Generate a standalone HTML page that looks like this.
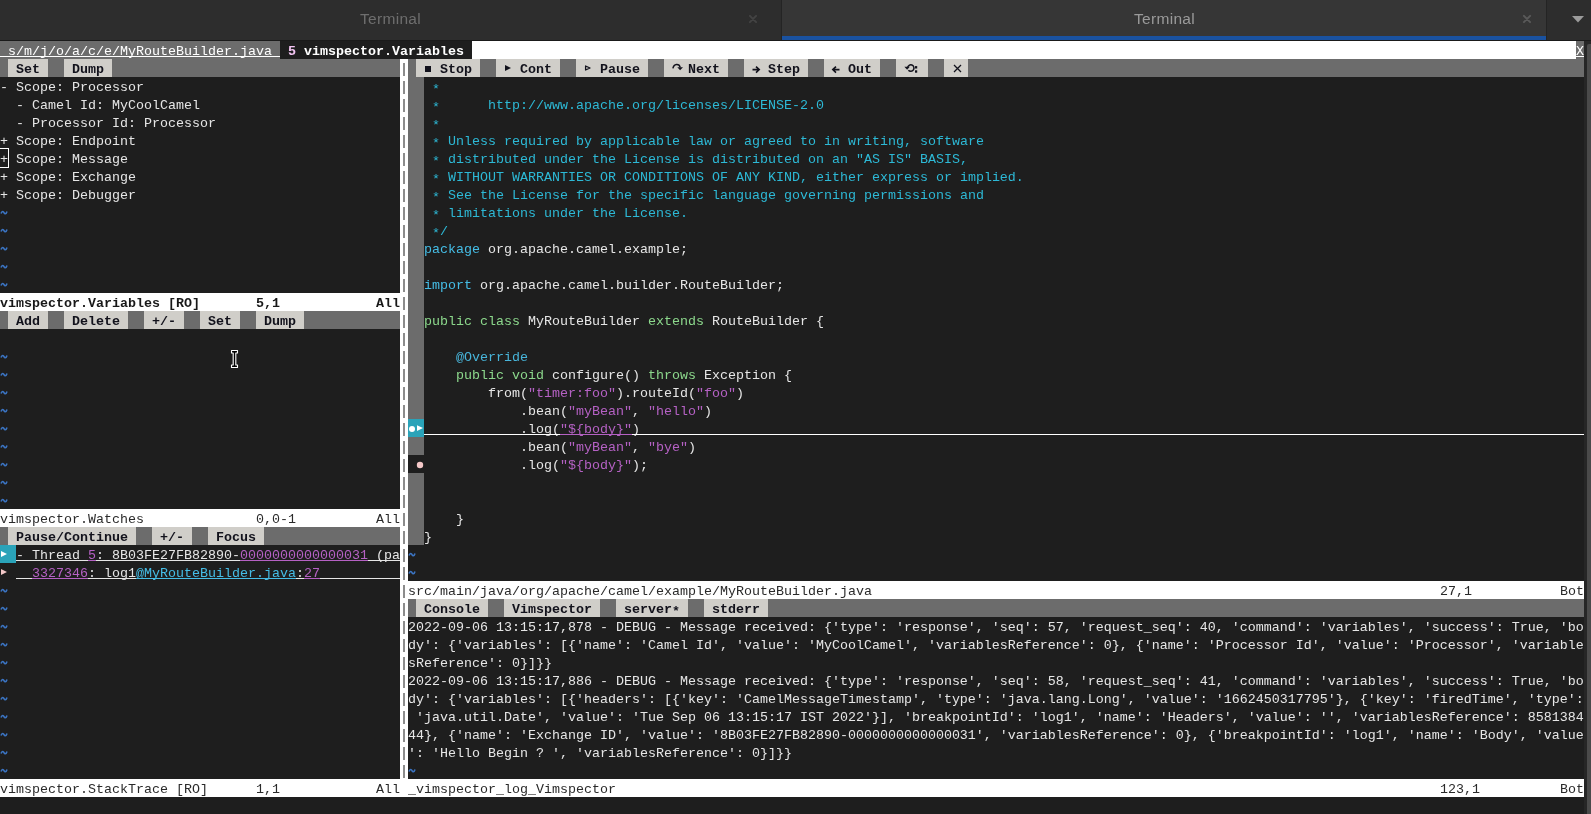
<!DOCTYPE html>
<html><head><meta charset="utf-8"><style>
html,body{margin:0;padding:0;background:#1e1e1e;width:1591px;height:814px;overflow:hidden;position:relative}
.t{position:absolute;white-space:pre;font-family:"Liberation Mono",monospace;font-size:13.333px;line-height:16px;letter-spacing:0.000px}
.s{position:absolute;white-space:pre;font-family:"Liberation Sans",sans-serif;font-size:15.5px;line-height:20px;letter-spacing:0.3px}
</style></head><body><div style="position:absolute;left:0;top:0;width:1591px;height:814px;will-change:transform">
<div style="position:absolute;left:0px;top:0px;width:1591px;height:40px;background:#2d2d2d;"></div>
<div style="position:absolute;left:782px;top:0px;width:764px;height:40px;background:#363636;"></div>
<div style="position:absolute;left:781px;top:0px;width:1px;height:40px;background:#242424;"></div>
<div style="position:absolute;left:1546px;top:0px;width:1px;height:40px;background:#242424;"></div>
<div style="position:absolute;left:782px;top:36px;width:764px;height:4px;background:#1a52a0;"></div>
<div style="position:absolute;left:0px;top:40px;width:1591px;height:1px;background:#1a1a1a;"></div>
<span class="s" style="left:360px;top:9px;color:#6e6e6e;">Terminal</span>
<span class="s" style="left:1134px;top:9px;color:#9a9a9a;">Terminal</span>
<svg style="position:absolute;left:748px;top:14px" width="10" height="10" viewBox="0 0 10 10"><path d="M1.9 1.9 L8.1 8.1 M8.1 1.9 L1.9 8.1" stroke="#434343" stroke-width="2" stroke-linecap="round"/></svg>
<svg style="position:absolute;left:1522px;top:14px" width="10" height="10" viewBox="0 0 10 10"><path d="M1.9 1.9 L8.1 8.1 M8.1 1.9 L1.9 8.1" stroke="#595959" stroke-width="2" stroke-linecap="round"/></svg>
<svg style="position:absolute;left:1572px;top:16px" width="12" height="7" viewBox="0 0 12 7"><path d="M0 0 L12 0 L6 6.5 Z" fill="#9b9b9b"/></svg>
<div style="position:absolute;left:1584px;top:41px;width:7px;height:773px;background:#262626;"></div>
<div style="position:absolute;left:1587px;top:44px;width:4px;height:770px;background:#4a4a4a;border-radius:2px 0 0 0;"></div>
<div style="position:absolute;left:0px;top:41px;width:1584px;height:773px;background:#1e1e1e;"></div>
<div style="position:absolute;left:0px;top:41px;width:280px;height:18px;background:#6c6c6c;"></div>
<span class="t" style="left:8px;top:43.5px;color:#ffffff;">s/m/j/o/a/c/e/MyRouteBuilder.java</span>
<div style="position:absolute;left:0px;top:56px;width:280px;height:1px;background:#ffffff;"></div>
<div style="position:absolute;left:280px;top:41px;width:192px;height:18px;background:#1e1e1e;"></div>
<span class="t" style="left:288px;top:43.5px;color:#f5c6f5;font-weight:bold;">5</span>
<span class="t" style="left:304px;top:43.5px;color:#ffffff;font-weight:bold;">vimspector.Variables</span>
<div style="position:absolute;left:472px;top:41px;width:1104px;height:18px;background:#ffffff;"></div>
<div style="position:absolute;left:1576px;top:41px;width:8px;height:18px;background:#6c6c6c;"></div>
<span class="t" style="left:1576px;top:43.5px;color:#ffffff;">X</span>
<div style="position:absolute;left:1576px;top:56px;width:8px;height:1px;background:#ffffff;"></div>
<div style="position:absolute;left:400px;top:59px;width:8px;height:18px;background:#ffffff;"></div>
<div style="position:absolute;left:403px;top:63px;width:2px;height:13px;background:#8c8c8c;"></div>
<div style="position:absolute;left:400px;top:77px;width:8px;height:18px;background:#ffffff;"></div>
<div style="position:absolute;left:403px;top:81px;width:2px;height:13px;background:#8c8c8c;"></div>
<div style="position:absolute;left:400px;top:95px;width:8px;height:18px;background:#ffffff;"></div>
<div style="position:absolute;left:403px;top:99px;width:2px;height:13px;background:#8c8c8c;"></div>
<div style="position:absolute;left:400px;top:113px;width:8px;height:18px;background:#ffffff;"></div>
<div style="position:absolute;left:403px;top:117px;width:2px;height:13px;background:#8c8c8c;"></div>
<div style="position:absolute;left:400px;top:131px;width:8px;height:18px;background:#ffffff;"></div>
<div style="position:absolute;left:403px;top:135px;width:2px;height:13px;background:#8c8c8c;"></div>
<div style="position:absolute;left:400px;top:149px;width:8px;height:18px;background:#ffffff;"></div>
<div style="position:absolute;left:403px;top:153px;width:2px;height:13px;background:#8c8c8c;"></div>
<div style="position:absolute;left:400px;top:167px;width:8px;height:18px;background:#ffffff;"></div>
<div style="position:absolute;left:403px;top:171px;width:2px;height:13px;background:#8c8c8c;"></div>
<div style="position:absolute;left:400px;top:185px;width:8px;height:18px;background:#ffffff;"></div>
<div style="position:absolute;left:403px;top:189px;width:2px;height:13px;background:#8c8c8c;"></div>
<div style="position:absolute;left:400px;top:203px;width:8px;height:18px;background:#ffffff;"></div>
<div style="position:absolute;left:403px;top:207px;width:2px;height:13px;background:#8c8c8c;"></div>
<div style="position:absolute;left:400px;top:221px;width:8px;height:18px;background:#ffffff;"></div>
<div style="position:absolute;left:403px;top:225px;width:2px;height:13px;background:#8c8c8c;"></div>
<div style="position:absolute;left:400px;top:239px;width:8px;height:18px;background:#ffffff;"></div>
<div style="position:absolute;left:403px;top:243px;width:2px;height:13px;background:#8c8c8c;"></div>
<div style="position:absolute;left:400px;top:257px;width:8px;height:18px;background:#ffffff;"></div>
<div style="position:absolute;left:403px;top:261px;width:2px;height:13px;background:#8c8c8c;"></div>
<div style="position:absolute;left:400px;top:275px;width:8px;height:18px;background:#ffffff;"></div>
<div style="position:absolute;left:403px;top:279px;width:2px;height:13px;background:#8c8c8c;"></div>
<div style="position:absolute;left:400px;top:293px;width:8px;height:18px;background:#ffffff;"></div>
<div style="position:absolute;left:403px;top:297px;width:2px;height:13px;background:#8c8c8c;"></div>
<div style="position:absolute;left:400px;top:311px;width:8px;height:18px;background:#ffffff;"></div>
<div style="position:absolute;left:403px;top:315px;width:2px;height:13px;background:#8c8c8c;"></div>
<div style="position:absolute;left:400px;top:329px;width:8px;height:18px;background:#ffffff;"></div>
<div style="position:absolute;left:403px;top:333px;width:2px;height:13px;background:#8c8c8c;"></div>
<div style="position:absolute;left:400px;top:347px;width:8px;height:18px;background:#ffffff;"></div>
<div style="position:absolute;left:403px;top:351px;width:2px;height:13px;background:#8c8c8c;"></div>
<div style="position:absolute;left:400px;top:365px;width:8px;height:18px;background:#ffffff;"></div>
<div style="position:absolute;left:403px;top:369px;width:2px;height:13px;background:#8c8c8c;"></div>
<div style="position:absolute;left:400px;top:383px;width:8px;height:18px;background:#ffffff;"></div>
<div style="position:absolute;left:403px;top:387px;width:2px;height:13px;background:#8c8c8c;"></div>
<div style="position:absolute;left:400px;top:401px;width:8px;height:18px;background:#ffffff;"></div>
<div style="position:absolute;left:403px;top:405px;width:2px;height:13px;background:#8c8c8c;"></div>
<div style="position:absolute;left:400px;top:419px;width:8px;height:18px;background:#ffffff;"></div>
<div style="position:absolute;left:403px;top:423px;width:2px;height:13px;background:#8c8c8c;"></div>
<div style="position:absolute;left:400px;top:437px;width:8px;height:18px;background:#ffffff;"></div>
<div style="position:absolute;left:403px;top:441px;width:2px;height:13px;background:#8c8c8c;"></div>
<div style="position:absolute;left:400px;top:455px;width:8px;height:18px;background:#ffffff;"></div>
<div style="position:absolute;left:403px;top:459px;width:2px;height:13px;background:#8c8c8c;"></div>
<div style="position:absolute;left:400px;top:473px;width:8px;height:18px;background:#ffffff;"></div>
<div style="position:absolute;left:403px;top:477px;width:2px;height:13px;background:#8c8c8c;"></div>
<div style="position:absolute;left:400px;top:491px;width:8px;height:18px;background:#ffffff;"></div>
<div style="position:absolute;left:403px;top:495px;width:2px;height:13px;background:#8c8c8c;"></div>
<div style="position:absolute;left:400px;top:509px;width:8px;height:18px;background:#ffffff;"></div>
<div style="position:absolute;left:403px;top:513px;width:2px;height:13px;background:#8c8c8c;"></div>
<div style="position:absolute;left:400px;top:527px;width:8px;height:18px;background:#ffffff;"></div>
<div style="position:absolute;left:403px;top:531px;width:2px;height:13px;background:#8c8c8c;"></div>
<div style="position:absolute;left:400px;top:545px;width:8px;height:18px;background:#ffffff;"></div>
<div style="position:absolute;left:403px;top:549px;width:2px;height:13px;background:#8c8c8c;"></div>
<div style="position:absolute;left:400px;top:563px;width:8px;height:18px;background:#ffffff;"></div>
<div style="position:absolute;left:403px;top:567px;width:2px;height:13px;background:#8c8c8c;"></div>
<div style="position:absolute;left:400px;top:581px;width:8px;height:18px;background:#ffffff;"></div>
<div style="position:absolute;left:403px;top:585px;width:2px;height:13px;background:#8c8c8c;"></div>
<div style="position:absolute;left:400px;top:599px;width:8px;height:18px;background:#ffffff;"></div>
<div style="position:absolute;left:403px;top:603px;width:2px;height:13px;background:#8c8c8c;"></div>
<div style="position:absolute;left:400px;top:617px;width:8px;height:18px;background:#ffffff;"></div>
<div style="position:absolute;left:403px;top:621px;width:2px;height:13px;background:#8c8c8c;"></div>
<div style="position:absolute;left:400px;top:635px;width:8px;height:18px;background:#ffffff;"></div>
<div style="position:absolute;left:403px;top:639px;width:2px;height:13px;background:#8c8c8c;"></div>
<div style="position:absolute;left:400px;top:653px;width:8px;height:18px;background:#ffffff;"></div>
<div style="position:absolute;left:403px;top:657px;width:2px;height:13px;background:#8c8c8c;"></div>
<div style="position:absolute;left:400px;top:671px;width:8px;height:18px;background:#ffffff;"></div>
<div style="position:absolute;left:403px;top:675px;width:2px;height:13px;background:#8c8c8c;"></div>
<div style="position:absolute;left:400px;top:689px;width:8px;height:18px;background:#ffffff;"></div>
<div style="position:absolute;left:403px;top:693px;width:2px;height:13px;background:#8c8c8c;"></div>
<div style="position:absolute;left:400px;top:707px;width:8px;height:18px;background:#ffffff;"></div>
<div style="position:absolute;left:403px;top:711px;width:2px;height:13px;background:#8c8c8c;"></div>
<div style="position:absolute;left:400px;top:725px;width:8px;height:18px;background:#ffffff;"></div>
<div style="position:absolute;left:403px;top:729px;width:2px;height:13px;background:#8c8c8c;"></div>
<div style="position:absolute;left:400px;top:743px;width:8px;height:18px;background:#ffffff;"></div>
<div style="position:absolute;left:403px;top:747px;width:2px;height:13px;background:#8c8c8c;"></div>
<div style="position:absolute;left:400px;top:761px;width:8px;height:18px;background:#ffffff;"></div>
<div style="position:absolute;left:403px;top:765px;width:2px;height:13px;background:#8c8c8c;"></div>
<div style="position:absolute;left:0px;top:59px;width:400px;height:18px;background:#6c6c6c;"></div>
<div style="position:absolute;left:8px;top:59px;width:40px;height:18px;background:#d0cec9;"></div>
<span class="t" style="left:16px;top:61.5px;color:#12121c;font-weight:bold;">Set</span>
<div style="position:absolute;left:64px;top:59px;width:48px;height:18px;background:#d0cec9;"></div>
<span class="t" style="left:72px;top:61.5px;color:#12121c;font-weight:bold;">Dump</span>
<span class="t" style="left:0px;top:79.5px;color:#e6e6e6;">- Scope: Processor</span>
<span class="t" style="left:16px;top:97.5px;color:#e6e6e6;">- Camel Id: MyCoolCamel</span>
<span class="t" style="left:16px;top:115.5px;color:#e6e6e6;">- Processor Id: Processor</span>
<span class="t" style="left:0px;top:133.5px;color:#e6e6e6;">+ Scope: Endpoint</span>
<span class="t" style="left:0px;top:151.5px;color:#e6e6e6;">+ Scope: Message</span>
<span class="t" style="left:0px;top:169.5px;color:#e6e6e6;">+ Scope: Exchange</span>
<span class="t" style="left:0px;top:187.5px;color:#e6e6e6;">+ Scope: Debugger</span>
<svg style="position:absolute;left:0px;top:203px" width="8" height="18"><path d="M1 10.6 C2 7.6 3.4 8.2 4 9.6 C4.6 11 6 11.6 7 8.4" fill="none" stroke="#3b74c2" stroke-width="1.6"/></svg>
<svg style="position:absolute;left:0px;top:221px" width="8" height="18"><path d="M1 10.6 C2 7.6 3.4 8.2 4 9.6 C4.6 11 6 11.6 7 8.4" fill="none" stroke="#3b74c2" stroke-width="1.6"/></svg>
<svg style="position:absolute;left:0px;top:239px" width="8" height="18"><path d="M1 10.6 C2 7.6 3.4 8.2 4 9.6 C4.6 11 6 11.6 7 8.4" fill="none" stroke="#3b74c2" stroke-width="1.6"/></svg>
<svg style="position:absolute;left:0px;top:257px" width="8" height="18"><path d="M1 10.6 C2 7.6 3.4 8.2 4 9.6 C4.6 11 6 11.6 7 8.4" fill="none" stroke="#3b74c2" stroke-width="1.6"/></svg>
<svg style="position:absolute;left:0px;top:275px" width="8" height="18"><path d="M1 10.6 C2 7.6 3.4 8.2 4 9.6 C4.6 11 6 11.6 7 8.4" fill="none" stroke="#3b74c2" stroke-width="1.6"/></svg>
<div style="position:absolute;left:-1px;top:148px;width:10px;height:20px;background:transparent;box-sizing:border-box;border:1px solid #ffffff;"></div>
<div style="position:absolute;left:0px;top:293px;width:400px;height:18px;background:#ffffff;"></div>
<span class="t" style="left:0px;top:295.5px;color:#181818;font-weight:bold;">vimspector.Variables [RO]</span>
<span class="t" style="left:256px;top:295.5px;color:#181818;font-weight:bold;">5,1</span>
<span class="t" style="left:376px;top:295.5px;color:#181818;font-weight:bold;">All</span>
<div style="position:absolute;left:0px;top:311px;width:400px;height:18px;background:#6c6c6c;"></div>
<div style="position:absolute;left:8px;top:311px;width:40px;height:18px;background:#d0cec9;"></div>
<span class="t" style="left:16px;top:313.5px;color:#12121c;font-weight:bold;">Add</span>
<div style="position:absolute;left:64px;top:311px;width:64px;height:18px;background:#d0cec9;"></div>
<span class="t" style="left:72px;top:313.5px;color:#12121c;font-weight:bold;">Delete</span>
<div style="position:absolute;left:144px;top:311px;width:40px;height:18px;background:#d0cec9;"></div>
<span class="t" style="left:152px;top:313.5px;color:#12121c;font-weight:bold;">+/-</span>
<div style="position:absolute;left:200px;top:311px;width:40px;height:18px;background:#d0cec9;"></div>
<span class="t" style="left:208px;top:313.5px;color:#12121c;font-weight:bold;">Set</span>
<div style="position:absolute;left:256px;top:311px;width:48px;height:18px;background:#d0cec9;"></div>
<span class="t" style="left:264px;top:313.5px;color:#12121c;font-weight:bold;">Dump</span>
<svg style="position:absolute;left:0px;top:347px" width="8" height="18"><path d="M1 10.6 C2 7.6 3.4 8.2 4 9.6 C4.6 11 6 11.6 7 8.4" fill="none" stroke="#3b74c2" stroke-width="1.6"/></svg>
<svg style="position:absolute;left:0px;top:365px" width="8" height="18"><path d="M1 10.6 C2 7.6 3.4 8.2 4 9.6 C4.6 11 6 11.6 7 8.4" fill="none" stroke="#3b74c2" stroke-width="1.6"/></svg>
<svg style="position:absolute;left:0px;top:383px" width="8" height="18"><path d="M1 10.6 C2 7.6 3.4 8.2 4 9.6 C4.6 11 6 11.6 7 8.4" fill="none" stroke="#3b74c2" stroke-width="1.6"/></svg>
<svg style="position:absolute;left:0px;top:401px" width="8" height="18"><path d="M1 10.6 C2 7.6 3.4 8.2 4 9.6 C4.6 11 6 11.6 7 8.4" fill="none" stroke="#3b74c2" stroke-width="1.6"/></svg>
<svg style="position:absolute;left:0px;top:419px" width="8" height="18"><path d="M1 10.6 C2 7.6 3.4 8.2 4 9.6 C4.6 11 6 11.6 7 8.4" fill="none" stroke="#3b74c2" stroke-width="1.6"/></svg>
<svg style="position:absolute;left:0px;top:437px" width="8" height="18"><path d="M1 10.6 C2 7.6 3.4 8.2 4 9.6 C4.6 11 6 11.6 7 8.4" fill="none" stroke="#3b74c2" stroke-width="1.6"/></svg>
<svg style="position:absolute;left:0px;top:455px" width="8" height="18"><path d="M1 10.6 C2 7.6 3.4 8.2 4 9.6 C4.6 11 6 11.6 7 8.4" fill="none" stroke="#3b74c2" stroke-width="1.6"/></svg>
<svg style="position:absolute;left:0px;top:473px" width="8" height="18"><path d="M1 10.6 C2 7.6 3.4 8.2 4 9.6 C4.6 11 6 11.6 7 8.4" fill="none" stroke="#3b74c2" stroke-width="1.6"/></svg>
<svg style="position:absolute;left:0px;top:491px" width="8" height="18"><path d="M1 10.6 C2 7.6 3.4 8.2 4 9.6 C4.6 11 6 11.6 7 8.4" fill="none" stroke="#3b74c2" stroke-width="1.6"/></svg>
<div style="position:absolute;left:0px;top:509px;width:400px;height:18px;background:#ffffff;"></div>
<span class="t" style="left:0px;top:511.5px;color:#2a2a2a;">vimspector.Watches</span>
<span class="t" style="left:256px;top:511.5px;color:#2a2a2a;">0,0-1</span>
<span class="t" style="left:376px;top:511.5px;color:#2a2a2a;">All</span>
<div style="position:absolute;left:0px;top:527px;width:400px;height:18px;background:#6c6c6c;"></div>
<div style="position:absolute;left:8px;top:527px;width:128px;height:18px;background:#d0cec9;"></div>
<span class="t" style="left:16px;top:529.5px;color:#12121c;font-weight:bold;">Pause/Continue</span>
<div style="position:absolute;left:152px;top:527px;width:40px;height:18px;background:#d0cec9;"></div>
<span class="t" style="left:160px;top:529.5px;color:#12121c;font-weight:bold;">+/-</span>
<div style="position:absolute;left:208px;top:527px;width:56px;height:18px;background:#d0cec9;"></div>
<span class="t" style="left:216px;top:529.5px;color:#12121c;font-weight:bold;">Focus</span>
<div style="position:absolute;left:0px;top:545px;width:16px;height:18px;background:#2aa3b9;"></div>
<svg style="position:absolute;left:0px;top:545px;overflow:visible" width="8" height="18" viewBox="0 0 8 18"><path d="M1 6 L7 9 L1 12 Z" fill="#ffffff"/></svg>
<span class="t" style="left:16px;top:547.5px;color:#e6e6e6;">- Thread</span>
<span class="t" style="left:88px;top:547.5px;color:#b561c4;">5</span>
<span class="t" style="left:96px;top:547.5px;color:#e6e6e6;">: 8B03FE27FB82890-</span>
<span class="t" style="left:240px;top:547.5px;color:#b561c4;">0000000000000031</span>
<span class="t" style="left:376px;top:547.5px;color:#e6e6e6;">(pa</span>
<div style="position:absolute;left:16px;top:560px;width:384px;height:1px;background:#e6e6e6;"></div>
<div style="position:absolute;left:88px;top:560px;width:8px;height:1px;background:#b561c4;"></div>
<div style="position:absolute;left:240px;top:560px;width:128px;height:1px;background:#b561c4;"></div>
<svg style="position:absolute;left:0px;top:563px;overflow:visible" width="8" height="18" viewBox="0 0 8 18"><path d="M1 6 L7 9 L1 12 Z" fill="#f4c8c8"/></svg>
<span class="t" style="left:32px;top:565.5px;color:#b561c4;">3327346</span>
<span class="t" style="left:88px;top:565.5px;color:#e6e6e6;">: log1</span>
<span class="t" style="left:136px;top:565.5px;color:#45bde6;">@MyRouteBuilder.java</span>
<span class="t" style="left:296px;top:565.5px;color:#e6e6e6;">:</span>
<span class="t" style="left:304px;top:565.5px;color:#b561c4;">27</span>
<div style="position:absolute;left:16px;top:578px;width:384px;height:1px;background:#e6e6e6;"></div>
<div style="position:absolute;left:32px;top:578px;width:56px;height:1px;background:#b561c4;"></div>
<div style="position:absolute;left:136px;top:578px;width:160px;height:1px;background:#45bde6;"></div>
<div style="position:absolute;left:304px;top:578px;width:16px;height:1px;background:#b561c4;"></div>
<svg style="position:absolute;left:0px;top:581px" width="8" height="18"><path d="M1 10.6 C2 7.6 3.4 8.2 4 9.6 C4.6 11 6 11.6 7 8.4" fill="none" stroke="#3b74c2" stroke-width="1.6"/></svg>
<svg style="position:absolute;left:0px;top:599px" width="8" height="18"><path d="M1 10.6 C2 7.6 3.4 8.2 4 9.6 C4.6 11 6 11.6 7 8.4" fill="none" stroke="#3b74c2" stroke-width="1.6"/></svg>
<svg style="position:absolute;left:0px;top:617px" width="8" height="18"><path d="M1 10.6 C2 7.6 3.4 8.2 4 9.6 C4.6 11 6 11.6 7 8.4" fill="none" stroke="#3b74c2" stroke-width="1.6"/></svg>
<svg style="position:absolute;left:0px;top:635px" width="8" height="18"><path d="M1 10.6 C2 7.6 3.4 8.2 4 9.6 C4.6 11 6 11.6 7 8.4" fill="none" stroke="#3b74c2" stroke-width="1.6"/></svg>
<svg style="position:absolute;left:0px;top:653px" width="8" height="18"><path d="M1 10.6 C2 7.6 3.4 8.2 4 9.6 C4.6 11 6 11.6 7 8.4" fill="none" stroke="#3b74c2" stroke-width="1.6"/></svg>
<svg style="position:absolute;left:0px;top:671px" width="8" height="18"><path d="M1 10.6 C2 7.6 3.4 8.2 4 9.6 C4.6 11 6 11.6 7 8.4" fill="none" stroke="#3b74c2" stroke-width="1.6"/></svg>
<svg style="position:absolute;left:0px;top:689px" width="8" height="18"><path d="M1 10.6 C2 7.6 3.4 8.2 4 9.6 C4.6 11 6 11.6 7 8.4" fill="none" stroke="#3b74c2" stroke-width="1.6"/></svg>
<svg style="position:absolute;left:0px;top:707px" width="8" height="18"><path d="M1 10.6 C2 7.6 3.4 8.2 4 9.6 C4.6 11 6 11.6 7 8.4" fill="none" stroke="#3b74c2" stroke-width="1.6"/></svg>
<svg style="position:absolute;left:0px;top:725px" width="8" height="18"><path d="M1 10.6 C2 7.6 3.4 8.2 4 9.6 C4.6 11 6 11.6 7 8.4" fill="none" stroke="#3b74c2" stroke-width="1.6"/></svg>
<svg style="position:absolute;left:0px;top:743px" width="8" height="18"><path d="M1 10.6 C2 7.6 3.4 8.2 4 9.6 C4.6 11 6 11.6 7 8.4" fill="none" stroke="#3b74c2" stroke-width="1.6"/></svg>
<svg style="position:absolute;left:0px;top:761px" width="8" height="18"><path d="M1 10.6 C2 7.6 3.4 8.2 4 9.6 C4.6 11 6 11.6 7 8.4" fill="none" stroke="#3b74c2" stroke-width="1.6"/></svg>
<div style="position:absolute;left:0px;top:779px;width:400px;height:18px;background:#ffffff;"></div>
<span class="t" style="left:0px;top:781.5px;color:#2a2a2a;">vimspector.StackTrace [RO]</span>
<span class="t" style="left:256px;top:781.5px;color:#2a2a2a;">1,1</span>
<span class="t" style="left:376px;top:781.5px;color:#2a2a2a;">All</span>
<div style="position:absolute;left:400px;top:779px;width:8px;height:18px;background:#ffffff;"></div>
<div style="position:absolute;left:408px;top:59px;width:1176px;height:18px;background:#6c6c6c;"></div>
<div style="position:absolute;left:416px;top:59px;width:64px;height:18px;background:#d0cec9;"></div>
<span class="t" style="left:440px;top:61.5px;color:#12121c;font-weight:bold;">Stop</span>
<div style="position:absolute;left:496px;top:59px;width:64px;height:18px;background:#d0cec9;"></div>
<span class="t" style="left:520px;top:61.5px;color:#12121c;font-weight:bold;">Cont</span>
<div style="position:absolute;left:576px;top:59px;width:72px;height:18px;background:#d0cec9;"></div>
<span class="t" style="left:600px;top:61.5px;color:#12121c;font-weight:bold;">Pause</span>
<div style="position:absolute;left:664px;top:59px;width:64px;height:18px;background:#d0cec9;"></div>
<span class="t" style="left:688px;top:61.5px;color:#12121c;font-weight:bold;">Next</span>
<div style="position:absolute;left:744px;top:59px;width:64px;height:18px;background:#d0cec9;"></div>
<span class="t" style="left:768px;top:61.5px;color:#12121c;font-weight:bold;">Step</span>
<div style="position:absolute;left:824px;top:59px;width:56px;height:18px;background:#d0cec9;"></div>
<span class="t" style="left:848px;top:61.5px;color:#12121c;font-weight:bold;">Out</span>
<div style="position:absolute;left:896px;top:59px;width:32px;height:18px;background:#d0cec9;"></div>
<div style="position:absolute;left:944px;top:59px;width:24px;height:18px;background:#d0cec9;"></div>
<svg style="position:absolute;left:424px;top:59px;overflow:visible" width="8" height="18" viewBox="0 0 8 18"><rect x="1" y="7" width="6" height="6" fill="#12121c"/></svg>
<svg style="position:absolute;left:504px;top:59px;overflow:visible" width="8" height="18" viewBox="0 0 8 18"><path d="M1 6 L7 9 L1 12 Z" fill="#12121c"/></svg>
<svg style="position:absolute;left:584px;top:59px;overflow:visible" width="8" height="18" viewBox="0 0 8 18"><path d="M1.6 7 L6 9 L1.6 11 Z" fill="none" stroke="#12121c" stroke-width="1.3" stroke-linejoin="round"/></svg>
<svg style="position:absolute;left:672px;top:59px;overflow:visible" width="12" height="18" viewBox="0 0 12 18"><path d="M0.9 9.4 C1.8 4.4 7.2 4.4 8.2 8.4" fill="none" stroke="#12121c" stroke-width="1.5"/><path d="M5.3 8.2 L11 8.2 L8.1 11.2 Z" fill="#12121c"/></svg>
<svg style="position:absolute;left:752px;top:59px;overflow:visible" width="8" height="18" viewBox="0 0 8 18"><path d="M0.5 10.6 H7.2 M4 7.6 L7.2 10.6 L4 13.6" fill="none" stroke="#12121c" stroke-width="1.6"/></svg>
<svg style="position:absolute;left:832px;top:59px;overflow:visible" width="8" height="18" viewBox="0 0 8 18"><path d="M7.5 10.6 H0.8 M4 7.6 L0.8 10.6 L4 13.6" fill="none" stroke="#12121c" stroke-width="1.6"/></svg>
<svg style="position:absolute;left:904px;top:59px;overflow:visible" width="14" height="18" viewBox="0 0 14 18"><path d="M3.6 8.6 A3.2 3.2 0 1 1 4.4 11.2" fill="none" stroke="#12121c" stroke-width="1.5"/><path d="M0.4 7.8 L5.8 7.8 L3.1 10.8 Z" fill="#12121c"/><rect x="11" y="7.1" width="2.2" height="2.4" fill="#12121c"/><rect x="11" y="11.3" width="2.2" height="2.4" fill="#12121c"/></svg>
<svg style="position:absolute;left:952px;top:59px;overflow:visible" width="10" height="18" viewBox="0 0 10 18"><path d="M2 6 L9 13 M9 6 L2 13" fill="none" stroke="#12121c" stroke-width="1.3"/></svg>
<div style="position:absolute;left:408px;top:77px;width:16px;height:18px;background:#6c6c6c;"></div>
<span class="t" style="left:432px;top:82.0px;color:#2db9d6;">*</span>
<div style="position:absolute;left:408px;top:95px;width:16px;height:18px;background:#6c6c6c;"></div>
<span class="t" style="left:432px;top:100.0px;color:#2db9d6;">*</span>
<span class="t" style="left:488px;top:97.5px;color:#2db9d6;">http://www.apache.org/licenses/LICENSE-2.0</span>
<div style="position:absolute;left:408px;top:113px;width:16px;height:18px;background:#6c6c6c;"></div>
<span class="t" style="left:432px;top:118.0px;color:#2db9d6;">*</span>
<div style="position:absolute;left:408px;top:131px;width:16px;height:18px;background:#6c6c6c;"></div>
<span class="t" style="left:432px;top:136.0px;color:#2db9d6;">*</span>
<span class="t" style="left:448px;top:133.5px;color:#2db9d6;">Unless required by applicable law or agreed to in writing, software</span>
<div style="position:absolute;left:408px;top:149px;width:16px;height:18px;background:#6c6c6c;"></div>
<span class="t" style="left:432px;top:154.0px;color:#2db9d6;">*</span>
<span class="t" style="left:448px;top:151.5px;color:#2db9d6;">distributed under the License is distributed on an &quot;AS IS&quot; BASIS,</span>
<div style="position:absolute;left:408px;top:167px;width:16px;height:18px;background:#6c6c6c;"></div>
<span class="t" style="left:432px;top:172.0px;color:#2db9d6;">*</span>
<span class="t" style="left:448px;top:169.5px;color:#2db9d6;">WITHOUT WARRANTIES OR CONDITIONS OF ANY KIND, either express or implied.</span>
<div style="position:absolute;left:408px;top:185px;width:16px;height:18px;background:#6c6c6c;"></div>
<span class="t" style="left:432px;top:190.0px;color:#2db9d6;">*</span>
<span class="t" style="left:448px;top:187.5px;color:#2db9d6;">See the License for the specific language governing permissions and</span>
<div style="position:absolute;left:408px;top:203px;width:16px;height:18px;background:#6c6c6c;"></div>
<span class="t" style="left:432px;top:208.0px;color:#2db9d6;">*</span>
<span class="t" style="left:448px;top:205.5px;color:#2db9d6;">limitations under the License.</span>
<div style="position:absolute;left:408px;top:221px;width:16px;height:18px;background:#6c6c6c;"></div>
<span class="t" style="left:432px;top:226.0px;color:#2db9d6;">*</span>
<span class="t" style="left:440px;top:223.5px;color:#2db9d6;">/</span>
<div style="position:absolute;left:408px;top:239px;width:16px;height:18px;background:#6c6c6c;"></div>
<span class="t" style="left:424px;top:241.5px;color:#45bde6;">package</span>
<span class="t" style="left:488px;top:241.5px;color:#e6e6e6;">org.apache.camel.example;</span>
<div style="position:absolute;left:408px;top:257px;width:16px;height:18px;background:#6c6c6c;"></div>
<div style="position:absolute;left:408px;top:275px;width:16px;height:18px;background:#6c6c6c;"></div>
<span class="t" style="left:424px;top:277.5px;color:#45bde6;">import</span>
<span class="t" style="left:480px;top:277.5px;color:#e6e6e6;">org.apache.camel.builder.RouteBuilder;</span>
<div style="position:absolute;left:408px;top:293px;width:16px;height:18px;background:#6c6c6c;"></div>
<div style="position:absolute;left:408px;top:311px;width:16px;height:18px;background:#6c6c6c;"></div>
<span class="t" style="left:424px;top:313.5px;color:#8cd88c;">public</span>
<span class="t" style="left:480px;top:313.5px;color:#8cd88c;">class</span>
<span class="t" style="left:528px;top:313.5px;color:#e6e6e6;">MyRouteBuilder</span>
<span class="t" style="left:648px;top:313.5px;color:#8cd88c;">extends</span>
<span class="t" style="left:712px;top:313.5px;color:#e6e6e6;">RouteBuilder {</span>
<div style="position:absolute;left:408px;top:329px;width:16px;height:18px;background:#6c6c6c;"></div>
<div style="position:absolute;left:408px;top:347px;width:16px;height:18px;background:#6c6c6c;"></div>
<span class="t" style="left:456px;top:349.5px;color:#48b5da;">@Override</span>
<div style="position:absolute;left:408px;top:365px;width:16px;height:18px;background:#6c6c6c;"></div>
<span class="t" style="left:456px;top:367.5px;color:#8cd88c;">public</span>
<span class="t" style="left:512px;top:367.5px;color:#8cd88c;">void</span>
<span class="t" style="left:552px;top:367.5px;color:#e6e6e6;">configure()</span>
<span class="t" style="left:648px;top:367.5px;color:#8cd88c;">throws</span>
<span class="t" style="left:704px;top:367.5px;color:#e6e6e6;">Exception {</span>
<div style="position:absolute;left:408px;top:383px;width:16px;height:18px;background:#6c6c6c;"></div>
<span class="t" style="left:488px;top:385.5px;color:#e6e6e6;">from(</span>
<span class="t" style="left:528px;top:385.5px;color:#b561c4;">&quot;timer:foo&quot;</span>
<span class="t" style="left:616px;top:385.5px;color:#e6e6e6;">).routeId(</span>
<span class="t" style="left:696px;top:385.5px;color:#b561c4;">&quot;foo&quot;</span>
<span class="t" style="left:736px;top:385.5px;color:#e6e6e6;">)</span>
<div style="position:absolute;left:408px;top:401px;width:16px;height:18px;background:#6c6c6c;"></div>
<span class="t" style="left:520px;top:403.5px;color:#e6e6e6;">.bean(</span>
<span class="t" style="left:568px;top:403.5px;color:#b561c4;">&quot;myBean&quot;</span>
<span class="t" style="left:632px;top:403.5px;color:#e6e6e6;">,</span>
<span class="t" style="left:648px;top:403.5px;color:#b561c4;">&quot;hello&quot;</span>
<span class="t" style="left:704px;top:403.5px;color:#e6e6e6;">)</span>
<div style="position:absolute;left:408px;top:419px;width:16px;height:18px;background:#2aa3b9;"></div>
<span class="t" style="left:520px;top:421.5px;color:#e6e6e6;">.log(</span>
<span class="t" style="left:560px;top:421.5px;color:#b561c4;">&quot;${body}&quot;</span>
<span class="t" style="left:632px;top:421.5px;color:#e6e6e6;">)</span>
<div style="position:absolute;left:408px;top:437px;width:16px;height:18px;background:#6c6c6c;"></div>
<span class="t" style="left:520px;top:439.5px;color:#e6e6e6;">.bean(</span>
<span class="t" style="left:568px;top:439.5px;color:#b561c4;">&quot;myBean&quot;</span>
<span class="t" style="left:632px;top:439.5px;color:#e6e6e6;">,</span>
<span class="t" style="left:648px;top:439.5px;color:#b561c4;">&quot;bye&quot;</span>
<span class="t" style="left:688px;top:439.5px;color:#e6e6e6;">)</span>
<div style="position:absolute;left:408px;top:455px;width:16px;height:18px;background:#1e1e1e;"></div>
<span class="t" style="left:520px;top:457.5px;color:#e6e6e6;">.log(</span>
<span class="t" style="left:560px;top:457.5px;color:#b561c4;">&quot;${body}&quot;</span>
<span class="t" style="left:632px;top:457.5px;color:#e6e6e6;">);</span>
<div style="position:absolute;left:408px;top:473px;width:16px;height:18px;background:#6c6c6c;"></div>
<div style="position:absolute;left:408px;top:491px;width:16px;height:18px;background:#6c6c6c;"></div>
<div style="position:absolute;left:408px;top:509px;width:16px;height:18px;background:#6c6c6c;"></div>
<span class="t" style="left:456px;top:511.5px;color:#e6e6e6;">}</span>
<div style="position:absolute;left:408px;top:527px;width:16px;height:18px;background:#6c6c6c;"></div>
<span class="t" style="left:424px;top:529.5px;color:#e6e6e6;">}</span>
<svg style="position:absolute;left:408px;top:419px;overflow:visible" width="16" height="18" viewBox="0 0 16 18"><circle cx="4" cy="10" r="3" fill="#ffffff"/><path d="M9 6.2 L15 9 L9 11.9 Z" fill="#ffffff"/></svg>
<svg style="position:absolute;left:408px;top:455px;overflow:visible" width="16" height="18" viewBox="0 0 16 18"><circle cx="12" cy="10" r="3.2" fill="#f4c8c8"/></svg>
<div style="position:absolute;left:424px;top:434px;width:1160px;height:1px;background:#ffffff;"></div>
<div style="position:absolute;left:560px;top:434px;width:72px;height:1px;background:#b561c4;"></div>
<svg style="position:absolute;left:408px;top:545px" width="8" height="18"><path d="M1 10.6 C2 7.6 3.4 8.2 4 9.6 C4.6 11 6 11.6 7 8.4" fill="none" stroke="#3b74c2" stroke-width="1.6"/></svg>
<svg style="position:absolute;left:408px;top:563px" width="8" height="18"><path d="M1 10.6 C2 7.6 3.4 8.2 4 9.6 C4.6 11 6 11.6 7 8.4" fill="none" stroke="#3b74c2" stroke-width="1.6"/></svg>
<div style="position:absolute;left:408px;top:581px;width:1176px;height:18px;background:#ffffff;"></div>
<span class="t" style="left:408px;top:583.5px;color:#2a2a2a;">src/main/java/org/apache/camel/example/MyRouteBuilder.java</span>
<span class="t" style="left:1440px;top:583.5px;color:#2a2a2a;">27,1</span>
<span class="t" style="left:1560px;top:583.5px;color:#2a2a2a;">Bot</span>
<div style="position:absolute;left:408px;top:599px;width:1176px;height:18px;background:#6c6c6c;"></div>
<div style="position:absolute;left:416px;top:599px;width:72px;height:18px;background:#d0cec9;"></div>
<span class="t" style="left:424px;top:601.5px;color:#12121c;font-weight:bold;">Console</span>
<div style="position:absolute;left:504px;top:599px;width:96px;height:18px;background:#d0cec9;"></div>
<span class="t" style="left:512px;top:601.5px;color:#12121c;font-weight:bold;">Vimspector</span>
<div style="position:absolute;left:616px;top:599px;width:72px;height:18px;background:#d0cec9;"></div>
<span class="t" style="left:624px;top:601.5px;color:#12121c;font-weight:bold;">server</span>
<div style="position:absolute;left:704px;top:599px;width:64px;height:18px;background:#d0cec9;"></div>
<span class="t" style="left:712px;top:601.5px;color:#12121c;font-weight:bold;">stderr</span>
<span class="t" style="left:672px;top:603.5px;color:#12121c;font-weight:bold">*</span>
<span class="t" style="left:408px;top:619.5px;color:#e6e6e6;">2022-09-06 13:15:17,878 - DEBUG - Message received: {&#x27;type&#x27;: &#x27;response&#x27;, &#x27;seq&#x27;: 57, &#x27;request_seq&#x27;: 40, &#x27;command&#x27;: &#x27;variables&#x27;, &#x27;success&#x27;: True, &#x27;bo</span>
<span class="t" style="left:408px;top:637.5px;color:#e6e6e6;">dy&#x27;: {&#x27;variables&#x27;: [{&#x27;name&#x27;: &#x27;Camel Id&#x27;, &#x27;value&#x27;: &#x27;MyCoolCamel&#x27;, &#x27;variablesReference&#x27;: 0}, {&#x27;name&#x27;: &#x27;Processor Id&#x27;, &#x27;value&#x27;: &#x27;Processor&#x27;, &#x27;variable</span>
<span class="t" style="left:408px;top:655.5px;color:#e6e6e6;">sReference&#x27;: 0}]}}</span>
<span class="t" style="left:408px;top:673.5px;color:#e6e6e6;">2022-09-06 13:15:17,886 - DEBUG - Message received: {&#x27;type&#x27;: &#x27;response&#x27;, &#x27;seq&#x27;: 58, &#x27;request_seq&#x27;: 41, &#x27;command&#x27;: &#x27;variables&#x27;, &#x27;success&#x27;: True, &#x27;bo</span>
<span class="t" style="left:408px;top:691.5px;color:#e6e6e6;">dy&#x27;: {&#x27;variables&#x27;: [{&#x27;headers&#x27;: [{&#x27;key&#x27;: &#x27;CamelMessageTimestamp&#x27;, &#x27;type&#x27;: &#x27;java.lang.Long&#x27;, &#x27;value&#x27;: &#x27;1662450317795&#x27;}, {&#x27;key&#x27;: &#x27;firedTime&#x27;, &#x27;type&#x27;:</span>
<span class="t" style="left:416px;top:709.5px;color:#e6e6e6;">&#x27;java.util.Date&#x27;, &#x27;value&#x27;: &#x27;Tue Sep 06 13:15:17 IST 2022&#x27;}], &#x27;breakpointId&#x27;: &#x27;log1&#x27;, &#x27;name&#x27;: &#x27;Headers&#x27;, &#x27;value&#x27;: &#x27;&#x27;, &#x27;variablesReference&#x27;: 8581384</span>
<span class="t" style="left:408px;top:727.5px;color:#e6e6e6;">44}, {&#x27;name&#x27;: &#x27;Exchange ID&#x27;, &#x27;value&#x27;: &#x27;8B03FE27FB82890-0000000000000031&#x27;, &#x27;variablesReference&#x27;: 0}, {&#x27;breakpointId&#x27;: &#x27;log1&#x27;, &#x27;name&#x27;: &#x27;Body&#x27;, &#x27;value</span>
<span class="t" style="left:408px;top:745.5px;color:#e6e6e6;">&#x27;: &#x27;Hello Begin ? &#x27;, &#x27;variablesReference&#x27;: 0}]}}</span>
<svg style="position:absolute;left:408px;top:761px" width="8" height="18"><path d="M1 10.6 C2 7.6 3.4 8.2 4 9.6 C4.6 11 6 11.6 7 8.4" fill="none" stroke="#3b74c2" stroke-width="1.6"/></svg>
<div style="position:absolute;left:408px;top:779px;width:1176px;height:18px;background:#ffffff;"></div>
<span class="t" style="left:408px;top:781.5px;color:#2a2a2a;">_vimspector_log_Vimspector</span>
<span class="t" style="left:1440px;top:781.5px;color:#2a2a2a;">123,1</span>
<span class="t" style="left:1560px;top:781.5px;color:#2a2a2a;">Bot</span>
<svg style="position:absolute;left:230px;top:349px" width="10" height="21" viewBox="0 0 10 21"><path d="M1.5 1.5 H7.5 V4 H5.8 V16 H7.5 V18.5 H1.5 V16 H3.2 V4 H1.5 Z" fill="#000" stroke="#fff" stroke-width="1.1" stroke-linejoin="round"/></svg>
</div></body></html>
